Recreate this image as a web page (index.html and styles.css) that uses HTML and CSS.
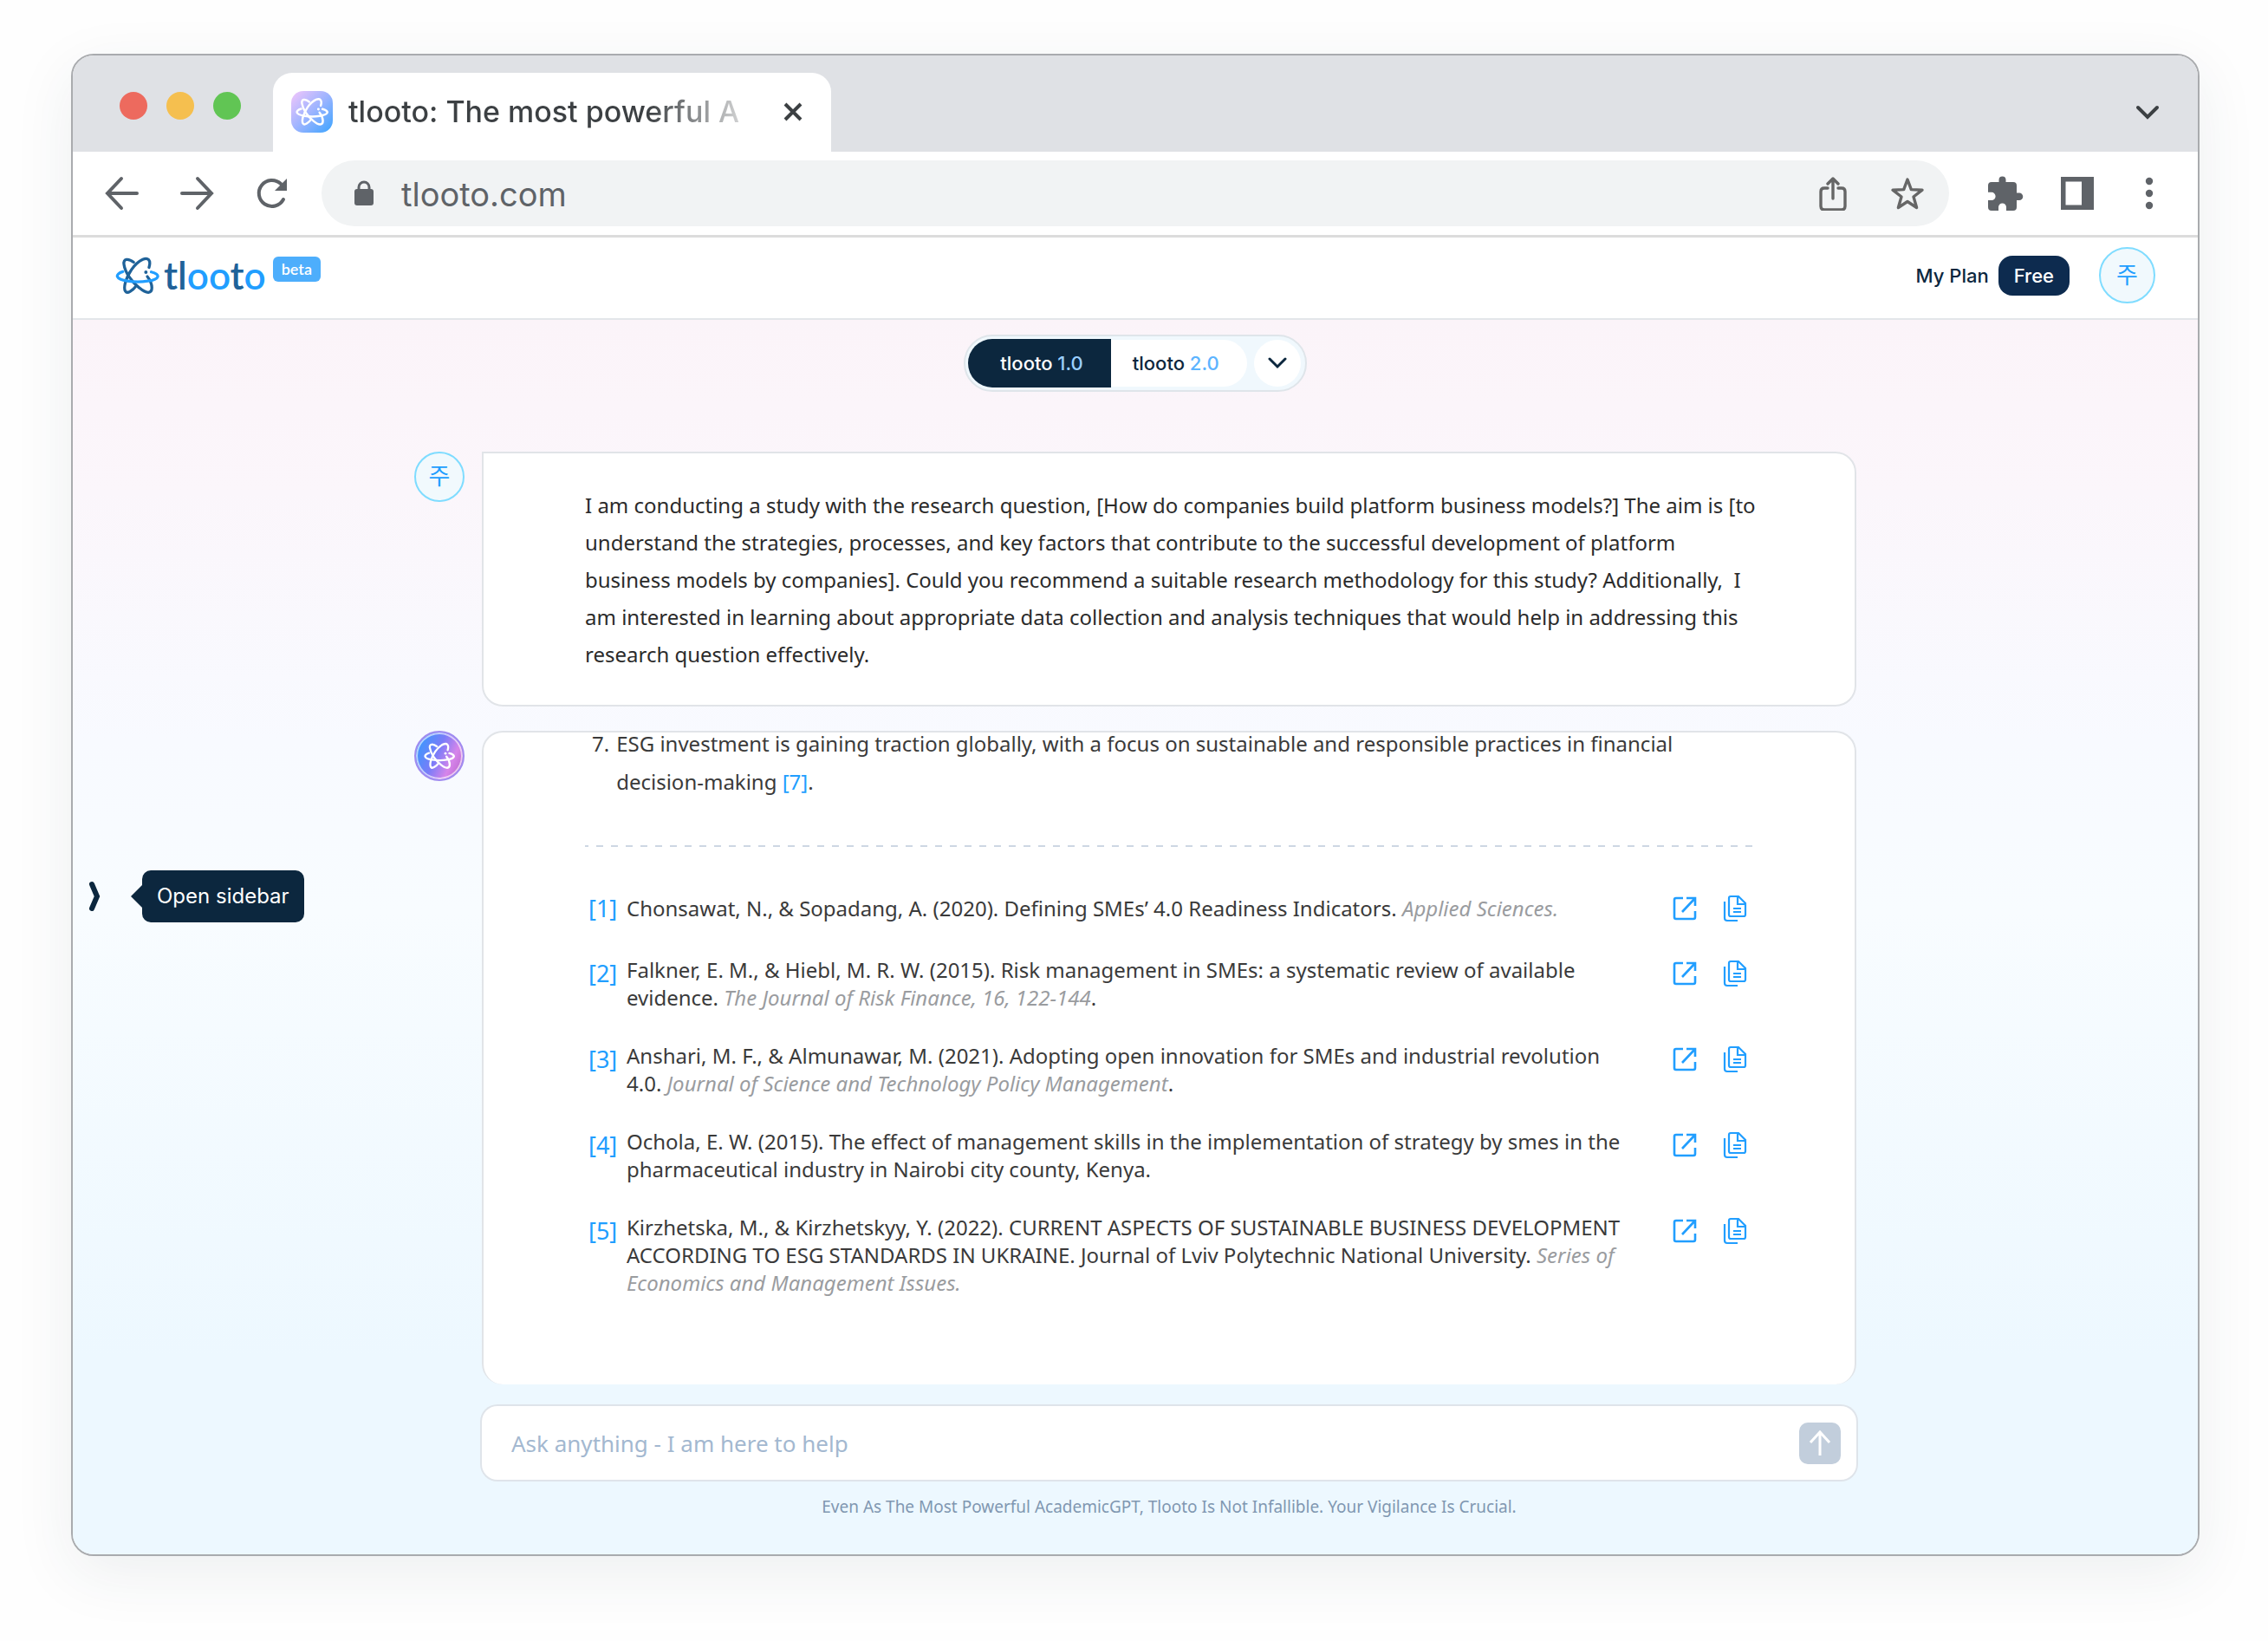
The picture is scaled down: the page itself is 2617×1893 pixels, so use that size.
FILE: index.html
```html
<!DOCTYPE html>
<html lang="en">
<head>
<meta charset="utf-8">
<title>tlooto: The most powerful AcademicGPT</title>
<link rel="stylesheet" href="styles.css">
</head>
<body>
<svg class="defs" width="0" height="0" aria-hidden="true">
  <symbol id="atom" viewBox="-2 -2 154 134">
    <g fill="none" stroke-width="10" stroke-linecap="round">
      <path class="orbit-dark" d="M116 36C124 10 112 0 94 8 64 22 40 60 32 92c-6 26 2 38 18 28 8-5 14-10 18-16"/>
      <path class="orbit-dark" d="M62 18C44 4 24 4 28 26c4 28 28 62 54 82 26 22 44 20 44 0 0-16-8-30-16-40"/>
      <path class="orbit-light" d="M24 51C-6 60-2 78 40 84c24 4 48 4 72 0 42-6 46-24 12-32"/>
    </g>
    <circle class="orbit-dot" cx="105" cy="53" r="6"/>
  </symbol>
  <symbol id="external" viewBox="0 0 28 28">
    <path d="M12 2H4Q2 2 2 4v20q0 2 2 2h20q2 0 2-2v-7M16 2h10v9M26 2 11 18" fill="none" stroke="currentColor" stroke-width="2.6"/>
  </symbol>
  <symbol id="copy" viewBox="0 0 28 32">
    <path d="M9 2h9l8 8v13q0 2-2 2H9q-2 0-2-2V4q0-2 2-2zM17 2v9h9M12 16h9M12 20h9" fill="none" stroke="currentColor" stroke-width="2.2"/>
    <path d="M2 8v19q0 3 3 3h12" fill="none" stroke="currentColor" stroke-width="2.2"/>
  </symbol>
</svg>

<div class="window">
  <div class="tabbar">
    <div class="lights"><span class="light red"></span><span class="light yellow"></span><span class="light green"></span></div>
    <div class="tab">
      <span class="favicon"><svg class="mark white" width="38" height="34"><use href="#atom"/></svg></span>
      <span class="tab-title">tlooto: The most powerful A</span>
      <button class="icon-btn close" aria-label="Close tab"><svg width="24" height="24" viewBox="0 0 24 24"><path d="M3 3l18 18M21 3 3 21" stroke="#3c4043" stroke-width="4"/></svg></button>
    </div>
    <button class="icon-btn tabs-menu" aria-label="Search tabs"><svg width="28" height="20" viewBox="0 0 28 20"><path d="M3 4l11 11L25 4" fill="none" stroke="#3c4043" stroke-width="4" stroke-linecap="round"/></svg></button>
  </div>

  <div class="toolbar">
    <div class="nav">
      <button class="icon-btn" aria-label="Back"><svg width="40" height="40" viewBox="0 0 40 40"><path d="M19 3 3 20l16 17M4 20h33" fill="none" stroke="#5f6368" stroke-width="4" stroke-linecap="round"/></svg></button>
      <button class="icon-btn" aria-label="Forward"><svg width="40" height="40" viewBox="0 0 40 40"><path d="M21 3l16 17-16 17M36 20H3" fill="none" stroke="#5f6368" stroke-width="4" stroke-linecap="round"/></svg></button>
      <button class="icon-btn" aria-label="Reload"><svg width="40" height="40" viewBox="0 0 40 40"><path d="M34 27a15 15 0 1 1-3-18" fill="none" stroke="#5f6368" stroke-width="4" stroke-linecap="round"/><path d="M38 3v14H24z" fill="#5f6368"/></svg></button>
    </div>
    <div class="omnibox">
      <svg width="24" height="30" viewBox="0 0 24 30"><path d="M6 12V8a6 6 0 0 1 12 0v4" fill="none" stroke="#5f6368" stroke-width="3"/><rect x="1" y="10" width="22" height="19" rx="3" fill="#5f6368"/></svg>
      <input class="url" type="text" aria-label="Address" value="tlooto.com">
      <button class="icon-btn" aria-label="Share"><svg width="40" height="40" viewBox="0 0 40 40" fill="none" stroke="#666" stroke-width="3.4" stroke-linecap="round" stroke-linejoin="round"><path d="M14 14h-4q-4 0-4 4v17q0 4 4 4h20q4 0 4-4V18q0-4-4-4h-4M20 26V3M14 9l6-6 6 6"/></svg></button>
      <button class="icon-btn" aria-label="Bookmark"><svg width="40" height="40" viewBox="0 0 40 40"><path d="M20 4l4.300 11.600 12.700.6-10 7.800 3.600 12.500L20 29.500 9.400 36.500 13 24 3 16.200l12.700-.6z" fill="none" stroke="#666" stroke-width="3.400" stroke-linejoin="round"/></svg></button>
    </div>
    <div class="tools">
      <button class="icon-btn" aria-label="Extensions"><svg width="42" height="42" viewBox="0 0 42 42"><path d="M5 8h8.500V5.500a4 4 0 0 1 8 0V8H30q4 0 4 4v8.500h3a4 4 0 0 1 0 8.500h-3v8q0 4-4 4h-8v-4a4.500 4.500 0 0 0-9 0v4H5q-4 0-4-4v-8h4a4.600 4.600 0 0 0 0-9.200H1V12q0-4 4-4z" fill="#5f6368"/></svg></button>
      <button class="icon-btn" aria-label="Side panel"><svg width="40" height="40" viewBox="0 0 40 40"><path d="M1 1h38v38H1zM6.500 6.500v27H25v-27z" fill="#5f6368" fill-rule="evenodd"/></svg></button>
      <button class="icon-btn" aria-label="Menu"><svg width="40" height="40" viewBox="0 0 40 40" fill="#5f6368"><circle cx="20" cy="6" r="4.200"/><circle cx="20" cy="20" r="4.200"/><circle cx="20" cy="34" r="4.200"/></svg></button>
    </div>
  </div>

  <header class="header">
    <a class="logo" href="#">
      <svg class="mark blue" width="51" height="44"><use href="#atom"/></svg>
      <span class="wordmark"><b>tl</b>oo<b>t</b>o</span>
      <span class="beta">beta</span>
    </a>
    <div class="account">
      <div class="plan">My Plan <span class="plan-pill">Free</span></div>
      <button class="avatar large">주</button>
    </div>
  </header>

  <main class="main">
    <aside class="side">
      <button class="handle" aria-label="Open sidebar"><svg width="14" height="36" viewBox="0 0 14 36"><path d="M4 4l6 14-6 14" fill="none" stroke="#0c273e" stroke-width="6" stroke-linecap="round"/></svg></button>
      <span class="tooltip">Open sidebar</span>
    </aside>

    <section class="chat">
      <div class="switch">
        <button class="version active">tlooto <span>1.0</span></button>
        <button class="version">tlooto <span>2.0</span></button>
        <button class="more" aria-label="More versions"><svg width="22" height="14" viewBox="0 0 22 14"><path d="M2 2l9 9 9-9" fill="none" stroke="#0c273e" stroke-width="3" stroke-linecap="round"/></svg></button>
      </div>

      <div class="thread">
        <article class="message">
          <span class="avatar">주</span>
          <div class="card question">
            <p>I am conducting a study with the research question, [How do companies build platform business models?] The aim is [to understand the strategies, processes, and key factors that contribute to the successful development of platform business models by companies]. Could you recommend a suitable research methodology for this study? Additionally,&nbsp; I am interested in learning about appropriate data collection and analysis techniques that would help in addressing this research question effectively.</p>
          </div>
        </article>

        <article class="message">
          <span class="avatar bot"><svg class="mark white" width="36" height="32"><use href="#atom"/></svg></span>
          <div class="card answer">
            <ol class="points" start="7">
              <li><span>7.</span><p>ESG investment is gaining traction globally, with a focus on sustainable and responsible practices in financial decision-making <a href="#ref7">[7]</a>.</p></li>
            </ol>
            <svg class="rule" height="2" aria-hidden="true"><line x1="0" y1="1" x2="100%" y2="1" stroke="#cdd7e3" stroke-width="2" stroke-dasharray="8 9" stroke-dashoffset="4"/></svg>
            <ul class="refs">
              <li><a class="num" href="#r1">[1]</a><p>Chonsawat, N., &amp; Sopadang, A. (2020). Defining SMEs’ 4.0 Readiness Indicators. <em>Applied Sciences.</em></p>
                <div class="actions"><button class="icon-btn" aria-label="Open"><svg width="28" height="28"><use href="#external"/></svg></button><button class="icon-btn" aria-label="Copy"><svg width="28" height="32"><use href="#copy"/></svg></button></div></li>
              <li><a class="num" href="#r2">[2]</a><p>Falkner, E. M., &amp; Hiebl, M. R. W. (2015). Risk management in SMEs: a systematic review of available evidence. <em>The Journal of Risk Finance, 16, 122-144</em>.</p>
                <div class="actions"><button class="icon-btn" aria-label="Open"><svg width="28" height="28"><use href="#external"/></svg></button><button class="icon-btn" aria-label="Copy"><svg width="28" height="32"><use href="#copy"/></svg></button></div></li>
              <li><a class="num" href="#r3">[3]</a><p>Anshari, M. F., &amp; Almunawar, M. (2021). Adopting open innovation for SMEs and industrial revolution 4.0. <em>Journal of Science and Technology Policy Management</em>.</p>
                <div class="actions"><button class="icon-btn" aria-label="Open"><svg width="28" height="28"><use href="#external"/></svg></button><button class="icon-btn" aria-label="Copy"><svg width="28" height="32"><use href="#copy"/></svg></button></div></li>
              <li><a class="num" href="#r4">[4]</a><p>Ochola, E. W. (2015). The effect of management skills in the implementation of strategy by smes in the pharmaceutical industry in Nairobi city county, Kenya.</p>
                <div class="actions"><button class="icon-btn" aria-label="Open"><svg width="28" height="28"><use href="#external"/></svg></button><button class="icon-btn" aria-label="Copy"><svg width="28" height="32"><use href="#copy"/></svg></button></div></li>
              <li><a class="num" href="#r5">[5]</a><p>Kirzhetska, M., &amp; Kirzhetskyy, Y. (2022). CURRENT ASPECTS OF SUSTAINABLE BUSINESS DEVELOPMENT ACCORDING TO ESG STANDARDS IN UKRAINE. Journal of Lviv Polytechnic National University. <em>Series of Economics and Management Issues.</em></p>
                <div class="actions"><button class="icon-btn" aria-label="Open"><svg width="28" height="28"><use href="#external"/></svg></button><button class="icon-btn" aria-label="Copy"><svg width="28" height="32"><use href="#copy"/></svg></button></div></li>
            </ul>
          </div>
        </article>
      </div>

      <div class="composer">
        <form class="ask">
          <input type="text" aria-label="Ask anything" placeholder="Ask anything - I am here to help">
          <button type="button" class="send" aria-label="Send"><svg width="28" height="32" viewBox="0 0 28 32"><path d="M14 30V3M3 15 14 3l11 12" fill="none" stroke="#fff" stroke-width="3"/></svg></button>
        </form>
        <p class="notice">Even As The Most Powerful AcademicGPT, Tlooto Is Not Infallible. Your Vigilance Is Crucial.</p>
      </div>
    </section>
  </main>
</div>
</body>
</html>
```
FILE: styles.css
```css
* { box-sizing: border-box; }

body {
  margin: 0;
  padding: 62px 79px 99px 82px;
  background: #fefefe;
  color: #3a3a3a;
  font-family: "Noto Sans", "Noto Sans CJK KR", sans-serif;
  font-size: 24px;
}

p, ul, ol { margin: 0; padding: 0; }
ul, ol { list-style: none; }
a { color: #219eff; text-decoration: none; }
button, input { font: inherit; border: 0; padding: 0; background: none; }
svg { display: block; flex: none; }
.defs { position: absolute; }

.icon-btn {
  display: flex;
  align-items: center;
  justify-content: center;
  flex: none;
  min-width: 40px;
  color: #219eff;
}

.window {
  border: 2px solid #a9abae;
  border-radius: 26px;
  overflow: hidden;
  background: #fff;
  box-shadow: 0 20px 70px rgba(40, 60, 80, 0.08);
}

/* Browser tab strip */
.tabbar {
  display: flex;
  align-items: center;
  padding: 20px 32px 0 54px;
  background: #dfe1e5;
}
.lights { display: flex; gap: 22px; margin: 0 37px 16px 0; }
.light { width: 32px; height: 32px; border-radius: 50%; }
.red { background: #ed6a5e; }
.yellow { background: #f5bf4f; }
.green { background: #61c554; }
.tab {
  display: flex;
  align-items: center;
  width: 644px;
  height: 91px;
  padding: 0 24px 2px 21px;
  border-radius: 22px 22px 0 0;
  background: #fff;
}
.favicon {
  display: flex;
  align-items: center;
  justify-content: center;
  width: 48px;
  height: 48px;
  margin-right: 18px;
  border-radius: 14px;
  background: linear-gradient(135deg, #f3c6fb, #9db4ff 50%, #3ba4ff);
}
.tab-title {
  flex: 1;
  overflow: hidden;
  white-space: nowrap;
  font-family: Inter, sans-serif;
  font-size: 34px;
  font-weight: 500;
  line-height: 44px;
  color: transparent;
  background: linear-gradient(90deg, #3c4043 345px, #fff 485px);
  background-clip: text;
  -webkit-background-clip: text;
}
.tabs-menu { margin-left: auto; padding: 0 12px; }

/* Address bar row */
.toolbar {
  display: flex;
  align-items: center;
  padding: 10px 36px 10px 37px;
  border-bottom: 3px solid #dcdcdc;
}
.nav { display: flex; gap: 46px; margin-right: 38px; }
.omnibox {
  display: flex;
  align-items: center;
  flex: 1;
  gap: 46px;
  height: 76px;
  padding: 0 28px 0 37px;
  border-radius: 38px;
  background: #f1f3f4;
}
.url {
  flex: 1;
  min-width: 0;
  margin-left: -15px;
  padding-top: 2px;
  font-family: Inter, sans-serif;
  font-size: 38px;
  color: #5f6368;
}
.tools { display: flex; gap: 43px; margin-left: 45px; }
.tools .icon-btn { width: 40px; }

/* Application header */
.header {
  display: flex;
  align-items: center;
  justify-content: space-between;
  padding: 11px 49px 17px;
  border-bottom: 2px solid #e3e6ea;
}
.logo { display: flex; }
.wordmark {
  margin-left: 5px;
  font-family: Lato, sans-serif;
  font-size: 44px;
  font-weight: 600;
  line-height: 42px;
  color: #219eff;
}
.wordmark b { font-weight: 600; color: #1f6299; }
.beta {
  height: 29px;
  margin-left: 8px;
  padding: 0 10px;
  border-radius: 6px;
  background: #4daefc;
  color: #fff;
  font-family: Lato, sans-serif;
  font-size: 18px;
  font-weight: 600;
  line-height: 28px;
}
.account, .plan { display: flex; align-items: center; }
.account { gap: 34px; }
.plan {
  gap: 11px;
  font-family: Inter, sans-serif;
  font-size: 22px;
  font-weight: 500;
  color: #0c273e;
}
.plan-pill {
  padding: 0 18px;
  border-radius: 16px;
  background: #0d2b4f;
  color: #fff;
  line-height: 46px;
}

.avatar {
  display: flex;
  align-items: center;
  justify-content: center;
  flex: none;
  width: 58px;
  height: 58px;
  padding-bottom: 2px;
  border: 2px solid #7fdcff;
  border-radius: 50%;
  background: #f1f9fd;
  color: #219eff;
  font-size: 27px;
  line-height: 40px;
}
.avatar.large { width: 65px; height: 65px; }
.avatar.bot {
  padding: 0;
  border: 2px solid #a08cf0;
  background: linear-gradient(115deg, #2ba0ff, #7a7cf8 45%, #d685ea 72%, #b45fc6);
  box-shadow: inset 0 0 0 2px rgba(255, 255, 255, 0.6);
}

.orbit-dark { stroke: var(--orbit, #1f6299); }
.orbit-light { stroke: var(--ring, #219eff); }
.orbit-dot { fill: var(--orbit, #1f6299); }
.mark.white { --orbit: #fff; --ring: #fff; }

/* Conversation */
.main {
  display: grid;
  grid-template-columns: minmax(300px, 1fr) minmax(0, 1664px) minmax(0, 1fr);
  background: linear-gradient(180deg, #fbf4f9 0, #fbf6fb 14%, #f8faff 34%, #f8fcff 48%, #edf8ff 84%);
}
.side {
  display: flex;
  align-items: center;
  align-self: start;
  gap: 48px;
  padding: 635px 0 0 18px;
}
.tooltip {
  position: relative;
  padding: 0 17px;
  border-radius: 10px;
  background: #0c273e;
  color: #fff;
  font-family: Inter, sans-serif;
  font-size: 24px;
  line-height: 60px;
  white-space: nowrap;
}
.tooltip::before {
  content: "";
  position: absolute;
  top: 17px;
  left: -13px;
  border: solid transparent;
  border-width: 13px 13px 13px 0;
  border-right-color: #0c273e;
}

.chat { padding: 17px 0 41px; }
.switch {
  display: flex;
  align-items: center;
  width: fit-content;
  margin: 0 auto 69px;
  padding: 3px 5px 3px 3px;
  border: 2px solid #dfe5ea;
  border-radius: 33px;
  background: #f0f8fd;
}
.version {
  height: 54px;
  padding: 0 32px 0 25px;
  border-radius: 0 27px 27px 0;
  background: #fff;
  color: #0c273e;
  font-family: Inter, sans-serif;
  font-size: 22px;
  font-weight: 500;
}
.version span { color: #5cb4ff; }
.version.active {
  height: 56px;
  padding: 0 32px 0 37px;
  border-radius: 28px 0 0 28px;
  background: #0c273e;
  color: #fff;
}
.version.active span { color: #9bcfff; }
.more {
  display: flex;
  align-items: center;
  justify-content: center;
  width: 54px;
  height: 54px;
  margin-left: 8px;
  border-radius: 50%;
  background: #fff;
}

.thread { display: grid; gap: 28px; }
.message { display: flex; align-items: flex-start; gap: 20px; }
.card {
  flex: 1;
  min-width: 0;
  border: 2px solid #e1e4e8;
  border-radius: 24px;
  background: #fff;
}
.question {
  padding: 38px 108px 37px 117px;
  border-top-left-radius: 0;
  color: #2b2b2b;
  line-height: 43px;
}
.answer {
  padding: 0 117px 101px;
  border-bottom: 0;
}
.points { margin-top: -9px; line-height: 44px; }
.points li { display: flex; gap: 8px; padding: 0 60px 0 8px; }
.rule { width: 100%; margin: 51px 0; }
.refs { display: grid; gap: 35px; line-height: 32px; }
.refs li {
  display: grid;
  grid-template-columns: 44px 1fr 86px;
  align-items: center;
  padding: 0 7px 0 4px;
}
.refs p { padding-right: 56px; }
.num, .actions { align-self: start; }
.num { font-size: 27px; line-height: 40px; }
.refs em { color: #9a9c9f; }
.actions { display: flex; justify-content: space-between; align-items: center; height: 40px; }
.actions .icon-btn { min-width: 28px; }

.composer { padding: 25px 0 0 78px; }
.ask {
  display: flex;
  align-items: center;
  height: 85px;
  padding: 0 18px 0 34px;
  border-radius: 18px;
  background: #fff;
  box-shadow: 0 0 0 2px #dfe4ea;
}
.ask input { flex: 1; min-width: 0; font-size: 26px; color: #3a3a3a; outline: 0; }
.ask input::placeholder { color: #a3b8d0; opacity: 1; }
.send {
  display: flex;
  align-items: center;
  justify-content: center;
  width: 48px;
  height: 48px;
  border-radius: 10px;
  background: #c2cedc;
}
.notice {
  margin-top: 17px;
  color: #8097b1;
  font-size: 19px;
  line-height: 28px;
  text-align: center;
}
```
